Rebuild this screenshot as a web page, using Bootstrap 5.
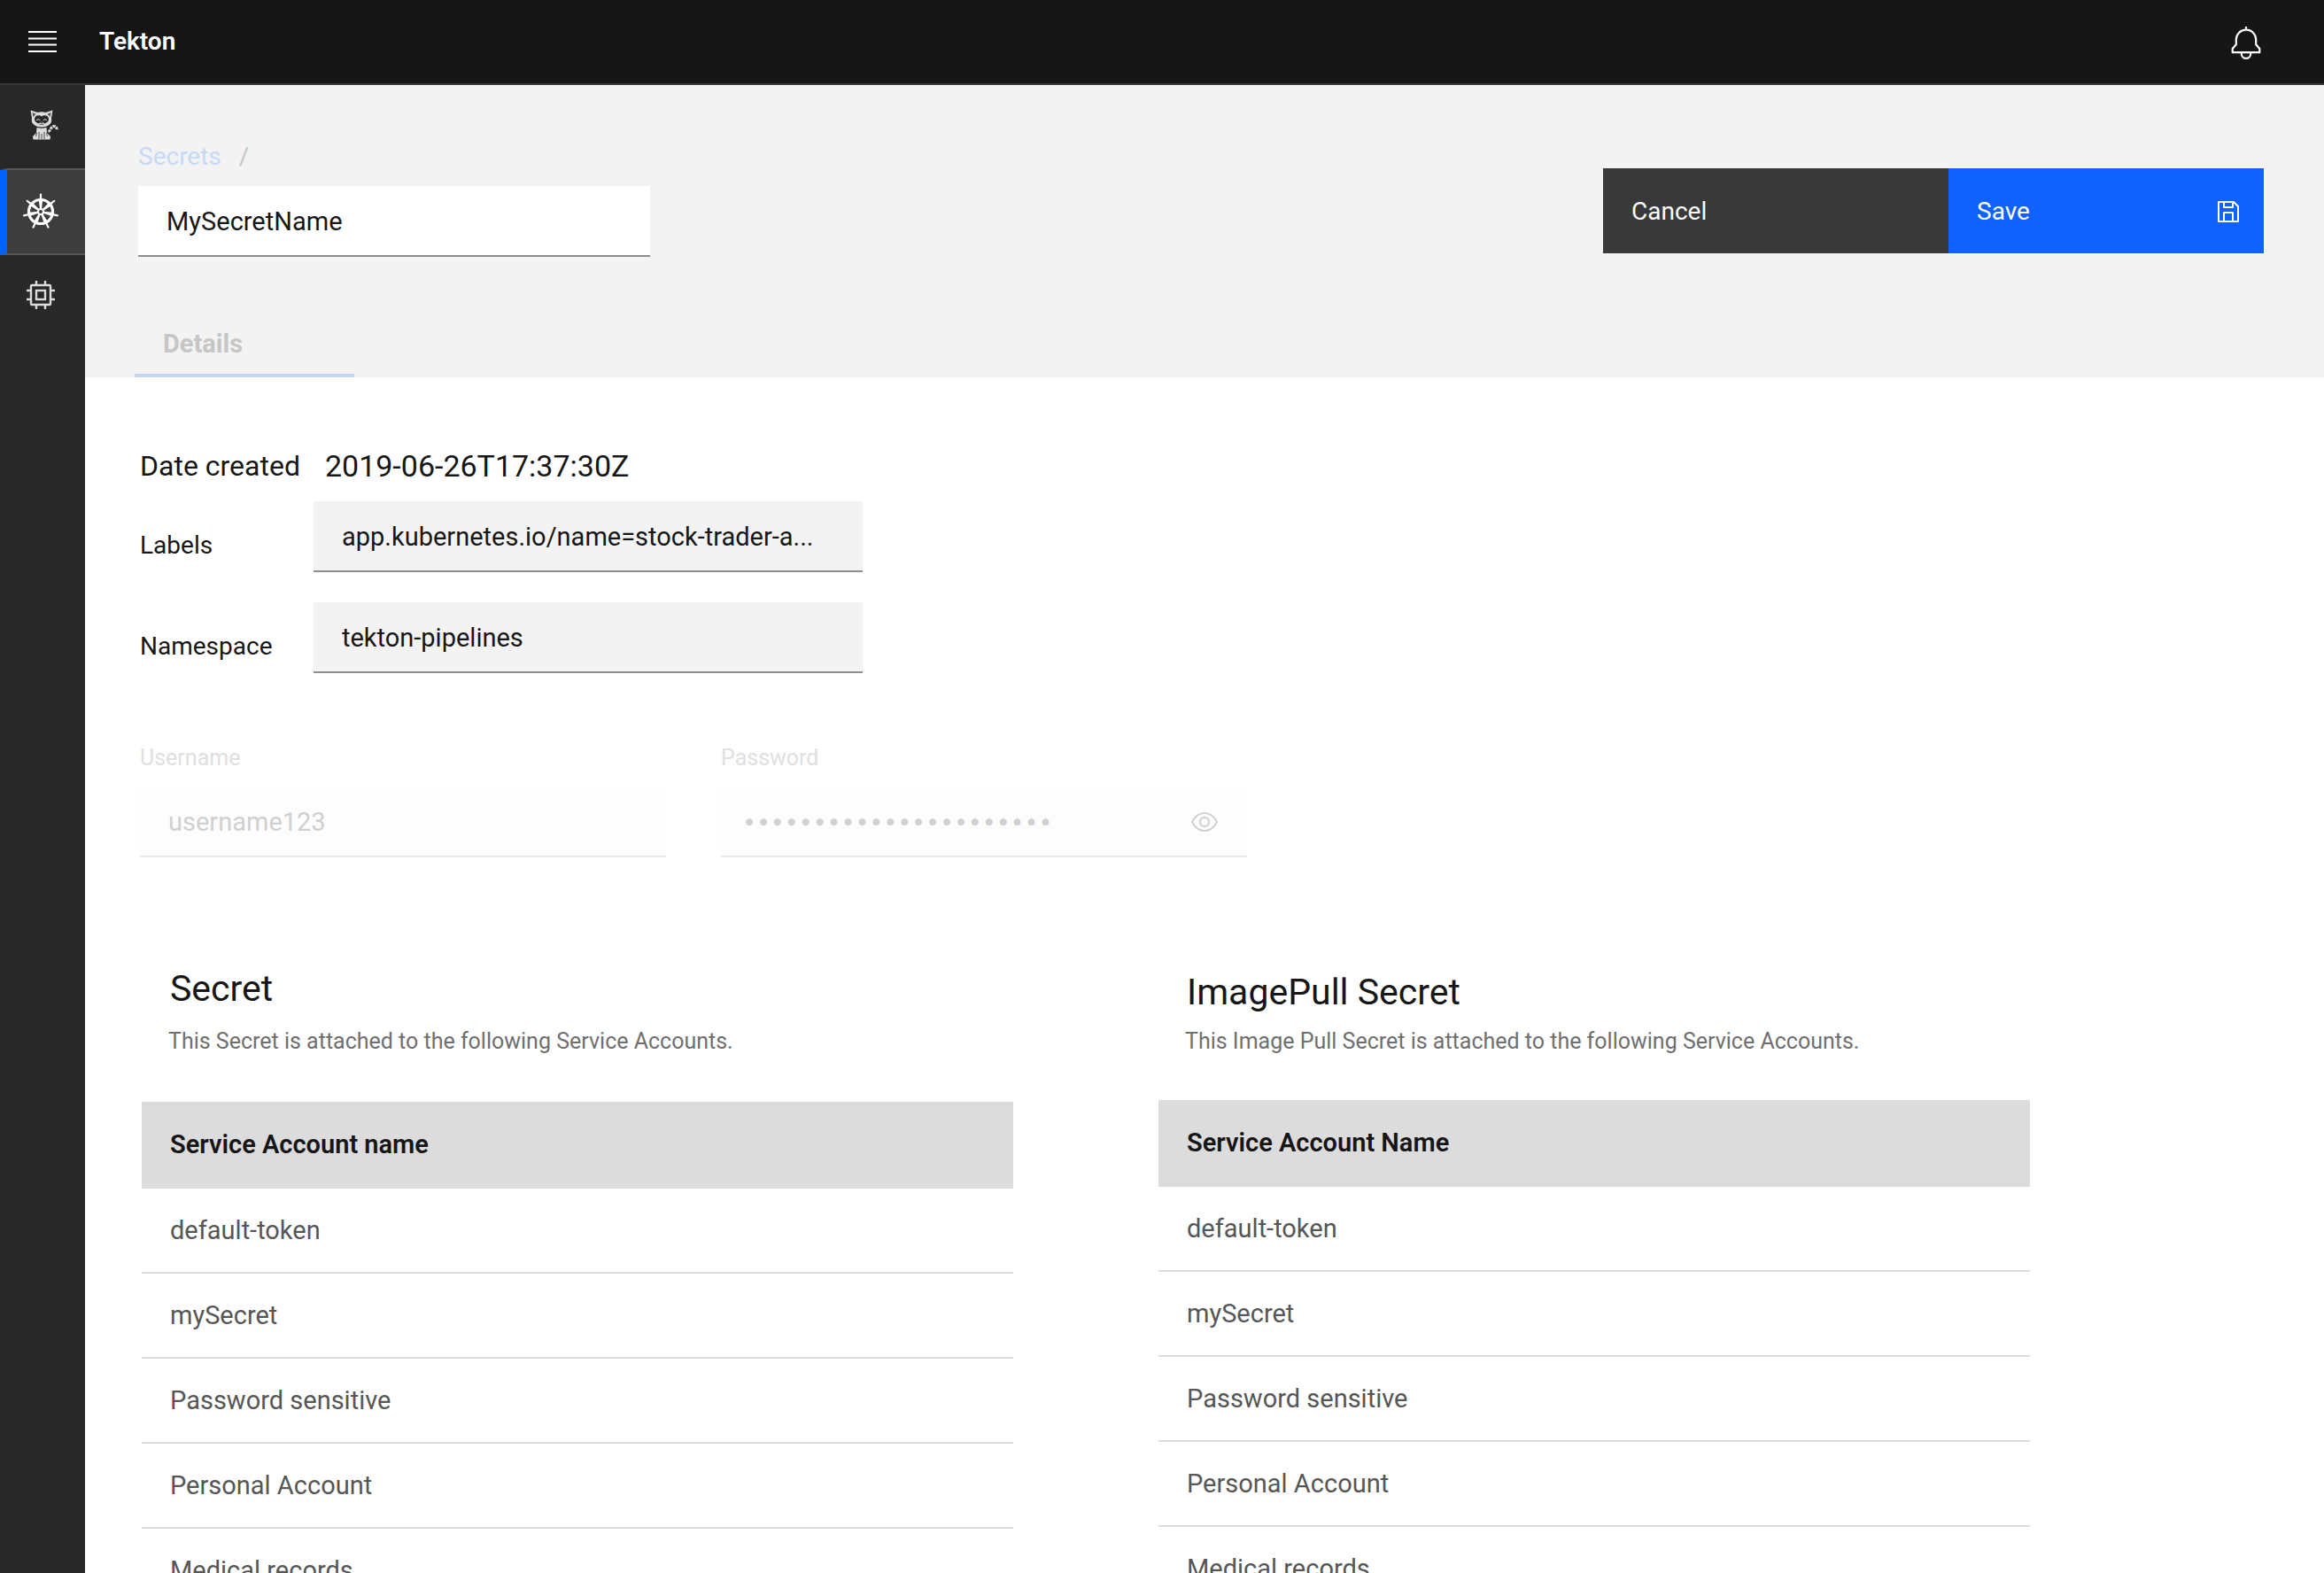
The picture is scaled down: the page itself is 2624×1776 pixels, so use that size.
<!DOCTYPE html>
<html lang="en">
<head>
<meta charset="utf-8">
<meta name="viewport" content="width=device-width, initial-scale=1">
<title>Tekton</title>
<link href="https://cdn.jsdelivr.net/npm/bootstrap@5.3.0/dist/css/bootstrap.min.css" rel="stylesheet">
<style>
  body { font-family: Roboto, "Liberation Sans", sans-serif; font-size: 28px; line-height: 36px; color: #161616; background: #fff; }
  svg { display: block; flex: none; }

  /* Top bar */
  .topbar { min-height: 96px; padding: 0 71px 0 32px; background: #161616; border-bottom: 2px solid #393939; }
  .menu-toggle { padding-top: 2px; }
  .brand { margin-left: 48px; font-weight: 600; color: #fff; }
  .bare { padding: 0; border: 0; background: none; }

  /* Side rail */
  .rail { flex: 0 0 96px; background: #282828; }
  .rail a { height: 96px; padding: 0 12px 4px 0; border-bottom: 2px solid transparent; border-left: 8px solid transparent; }
  .rail a.above { padding-right: 2px; border-bottom-color: #565656; }
  .rail a.current { padding-bottom: 0; background: #3d3d3d; border-bottom-color: #565656; border-left-color: #0062ff; }

  .workspace { min-width: 0; overflow: auto; scrollbar-width: none; }

  /* Page header */
  .masthead { padding: 0 68px 0 56px; background: #f3f3f3; }
  .crumbs { padding: 63px 0 15px; }
  .crumbs .breadcrumb-item { color: #c6c6c6; }
  .crumbs a { color: #c5d9f8; text-decoration: none; }
  .crumbs .breadcrumb-item + .breadcrumb-item { padding-left: 20px; }
  .crumbs .breadcrumb-item + .breadcrumb-item::before { padding: 0; color: #c6c6c6; }
  .field { height: 80px; padding: 2px 32px 0; border: 0; border-bottom: 2px solid #8d8d8d; border-radius: 0; background-color: #f3f3f3; color: #161616; font-size: 29px; line-height: 36px; }
  .field-title { width: 578px; background-color: #fff; }
  .tab-link { width: 248px; height: 72px; margin-top: 64px; padding: 16px 32px; border: 0; border-bottom: 4px solid #c5d6f5; background: none; color: #c6c6c6; font-size: 29px; font-weight: 700; text-align: left; }
  .actions { padding-top: 94px; }
  .action { height: 96px; padding: 2px 28px 0 32px; border: 0; border-radius: 0; color: #fff; font-size: 28px; }
  .action-cancel { width: 390px; background: #393939; }
  .action-save { width: 356px; background: #0f62fe; }

  /* Details form */
  .details { padding: 78px 62px 0; }
  .created { gap: 28px; margin-bottom: 18px; font-size: 32px; line-height: 44px; }
  .created time { font-size: 34px; }
  .pair { margin-bottom: 34px; }
  .pair label { width: 196px; padding-top: 32px; }
  .pair .field { width: 620px; }
  .credentials { gap: 62px; padding-top: 46px; }
  .credential { width: 594px; }
  .credential label { margin-bottom: 16px; color: #e0e0e0; font-size: 25px; line-height: 32px; }
  .credential .field:disabled { background-color: #fdfdfd; border-color: #e8e8e8; color: #d0d0d0; -webkit-text-fill-color: #d0d0d0; opacity: 1; }
  .credential .secret-dots { padding-left: 24px; font-family: "DejaVu Sans", sans-serif; font-size: 27px; }
  .reveal { top: 29px; right: 33px; }

  /* Service account panels */
  .panels { gap: 164px; padding: 120px 68px 0 64px; }
  .panel { flex: 1 1 0; max-width: 984px; }
  .panel h2 { margin: 0 0 16px; padding-left: 32px; font-size: 41px; line-height: 56px; font-weight: 400; }
  .panel p { margin: 0 0 52px; padding-left: 30px; color: #6f6f6f; font-size: 25px; line-height: 32px; }
  .panel-image h2 { margin: 4px 0 12px; }
  .panel-image p { margin-bottom: 50px; }
  .accounts { margin: 0; border-collapse: separate; border-spacing: 0; font-size: 29px; }
  .accounts th, .accounts td { height: 96px; padding: 0 32px; vertical-align: middle; border-bottom: 2px solid #dcdcdc; }
  .accounts th { height: 98px; background: #dcdcdc; color: #161616; font-weight: 600; }
  .accounts td { color: #565656; }
</style>
<script src="https://cdn.jsdelivr.net/npm/bootstrap@5.3.0/dist/js/bootstrap.bundle.min.js"></script>
</head>
<body>
<div class="d-flex flex-column vh-100 overflow-hidden">
  <header class="topbar d-flex align-items-center">
    <button class="bare menu-toggle" type="button" aria-label="Menu">
      <svg width="32" height="24" viewBox="0 0 32 24" stroke="#fff" stroke-width="2"><path d="M0 1h32M0 8.4h32M0 15.6h32M0 23h32"/></svg>
    </button>
    <span class="brand">Tekton</span>
    <button class="bare ms-auto pt-1" type="button" aria-label="Notifications">
      <svg width="34" height="38" viewBox="0 0 34 38" fill="none" stroke="#fff" stroke-width="2.2" stroke-linejoin="round"><path d="M17 0v4M17 3.6C10.500 3.600 5.800 8.700 5.800 15v5.200L1.700 25v4.200h30.600V25l-4.100-4.800V15C28.200 8.700 23.500 3.600 17 3.600z"/><path d="M11.800 29.500v1.200a5.200 5.200 0 0 0 10.400 0v-1.200"/></svg>
    </button>
  </header>

  <div class="d-flex flex-grow-1 overflow-hidden">
    <nav class="rail" aria-label="Main">
      <a class="above d-flex align-items-center justify-content-center" href="#" aria-label="Tekton">
        <svg width="34" height="34" viewBox="34 124 34 34">
          <g fill="#dcdcdc">
            <path d="M34.500 124.500l8 2.500q4.500-1.500 9 0l8-2.500-1.500 9q.8 4-1.500 6.500-3.500 3.500-9.500 3.500t-9.500-3.500q-2.300-2.500-1.500-6.500z"/>
            <path d="M41.500 144h11l.5 6 4 4-.5 3.500h-19l-.5-3.500 4-4z"/>
          </g>
          <path d="M54.500 148.500c2.500-.5 3-6 6.500-6 2.500 0 3 2 3.500 4.500" fill="none" stroke="#dcdcdc" stroke-width="3" stroke-dasharray="3 .8"/>
          <path d="M36.500 127l4 1.700-3 3.300zM57.500 127l-4 1.700 3 3.300z" fill="#555"/>
          <path d="M47 131.500c3-2.500 8-1 8 3 0 3-3 4.500-5 5h-6c-2-.5-5-2-5-5 0-4 5-5.500 8-3z" fill="#282828"/>
          <path d="M41 135.700q2-2 4.300 0M48.700 135.700q2.300-2 4.300 0" fill="none" stroke="#dcdcdc" stroke-width="1"/>
          <path d="M47 136.800l3.600 3.200-3.600 2.200-3.600-2.200z" fill="#dcdcdc"/>
          <path d="M45.700 137.800h2.600l-1.300 1.500zM44.500 140.300q1.300 1 2.500-.3 1.200 1.300 2.500.3" fill="#282828" stroke="#282828" stroke-width=".6"/>
          <path d="M44 149v8M50 149v8M47 151v6M41.500 150l-1 4M52.500 150l1 4M42 143.500q5 2.500 10 0" fill="none" stroke="#282828" stroke-width=".8"/>
        </svg>
      </a>
      <a class="current d-flex align-items-center justify-content-center" href="#" aria-label="Kubernetes">
        <svg width="42" height="42" viewBox="-21 -21 42 42" stroke="#fff" fill="none" stroke-linecap="round">
          <circle r="13.500" stroke-width="3.200"/>
          <g id="spokes"></g>
          <circle r="4" fill="#fff" stroke="none"/>
          <circle r="2" fill="#3d3d3d" stroke="none"/>
        </svg>
      </a>
      <a class="d-flex align-items-center justify-content-center" href="#" aria-label="Resources">
        <svg width="32" height="32" viewBox="0 0 32 32" fill="none" stroke="#dcdcdc" stroke-width="2.400"><rect x="5" y="5" width="22" height="22" rx="1"/><rect x="11" y="11" width="10" height="10"/><path d="M11 0v5M21 0v5M11 27v5M21 27v5M0 11h5M0 21h5M27 11h5M27 21h5"/></svg>
      </a>
    </nav>

    <main class="workspace flex-grow-1">
      <div class="masthead d-flex justify-content-between align-items-start">
        <div>
          <nav class="crumbs ms-1" aria-label="Breadcrumb">
            <ol class="breadcrumb m-0">
              <li class="breadcrumb-item"><a href="#">Secrets</a></li>
              <li class="breadcrumb-item" aria-hidden="true"></li>
            </ol>
          </nav>
          <input class="form-control field field-title ms-1" type="text" aria-label="Secret name" value="MySecretName">
          <button class="tab-link" type="button">Details</button>
        </div>
        <div class="actions d-flex">
          <button class="btn action action-cancel text-start" type="button">Cancel</button>
          <button class="btn action action-save d-flex align-items-center justify-content-between" type="submit">Save
            <svg width="24" height="24" viewBox="0 0 24 24" fill="none" stroke="#fff" stroke-width="2" stroke-linejoin="round"><path d="M1 1h17l5 5v17H1zM7 1v6h10V1M7 23V13h10v10"/></svg>
          </button>
        </div>
      </div>

      <form class="details">
        <div class="created d-flex"><span>Date created</span><time datetime="2019-06-26T17:37:30Z">2019-06-26T17:37:30Z</time></div>
        <div class="pair d-flex">
          <label for="labels">Labels</label>
          <input class="form-control field" id="labels" type="text" value="app.kubernetes.io/name=stock-trader-a...">
        </div>
        <div class="pair d-flex">
          <label for="namespace">Namespace</label>
          <input class="form-control field" id="namespace" type="text" value="tekton-pipelines">
        </div>
        <div class="credentials d-flex">
          <div class="credential">
            <label class="d-block" for="username">Username</label>
            <input class="form-control field" id="username" type="text" value="username123" disabled>
          </div>
          <div class="credential">
            <label class="d-block" for="password">Password</label>
            <div class="position-relative">
              <input class="form-control field secret-dots" id="password" type="password" value="0000000000000000000000" disabled>
              <button class="bare reveal position-absolute" type="button" aria-label="Show password" disabled>
                <svg width="30" height="22" viewBox="0 0 30 22" fill="none" stroke="#d0d0d0" stroke-width="2"><path d="M1 11C4 5 9 1 15 1s11 4 14 10c-3 6-8 10-14 10S4 17 1 11z"/><circle cx="15" cy="11" r="5"/></svg>
              </button>
            </div>
          </div>
        </div>
      </form>

      <div class="panels d-flex">
        <section class="panel">
          <h2>Secret</h2>
          <p>This Secret is attached to the following Service Accounts.</p>
          <table class="table accounts">
            <thead><tr><th scope="col">Service Account name</th></tr></thead>
            <tbody>
              <tr><td>default-token</td></tr>
              <tr><td>mySecret</td></tr>
              <tr><td>Password sensitive</td></tr>
              <tr><td>Personal Account</td></tr>
              <tr><td>Medical records</td></tr>
            </tbody>
          </table>
        </section>
        <section class="panel panel-image">
          <h2>ImagePull Secret</h2>
          <p>This Image Pull Secret is attached to the following Service Accounts.</p>
          <table class="table accounts">
            <thead><tr><th scope="col">Service Account Name</th></tr></thead>
            <tbody>
              <tr><td>default-token</td></tr>
              <tr><td>mySecret</td></tr>
              <tr><td>Password sensitive</td></tr>
              <tr><td>Personal Account</td></tr>
              <tr><td>Medical records</td></tr>
            </tbody>
          </table>
        </section>
      </div>
    </main>
  </div>
</div>
<script>
  // Seven evenly spaced spokes of the ship's wheel
  document.getElementById('spokes').innerHTML = Array.from({ length: 7 }, (_, i) =>
    `<path transform="rotate(${i * 360 / 7})" d="M0-13V-19.500" stroke-width="2.2"/><path transform="rotate(${i * 360 / 7})" d="M-1-3L-2.200-13H2.200L1-3z" fill="#fff" stroke="none"/>`).join('');
</script>
</body>
</html>
